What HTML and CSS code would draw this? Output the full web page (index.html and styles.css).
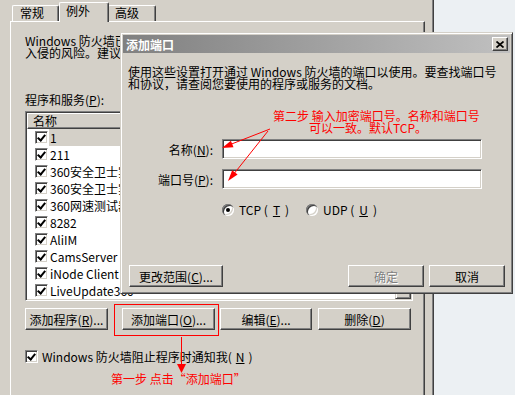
FILE: index.html
```html
<!DOCTYPE html>
<html lang="zh-CN">
<head>
    <meta charset="UTF-8">
    <meta name="viewport" content="width=device-width, initial-scale=1.0">
    <title>Windows 防火墙 - 添加端口</title>
    <link rel="stylesheet" href="styles.css">
</head>
<body>
    <div class="screen">
        <div class="fw-window">
            <div class="tabs">
                <div class="tab">常规</div>
                <div class="tab active">例外</div>
                <div class="tab last">高级</div>
            </div>
            <div class="panel">
                <p class="intro">Windows 防火墙已阻止传入的网络连接，但下面选定的程序和服务除外。添加例外<br>入侵的风险。建议您只添加确实需要的例外。</p>

                <div class="list-label">程序和服务(<u>P</u>):</div>
                <div class="listbox">
                    <div class="list-main">
                        <div class="list-head">名称</div>
                        <ul class="list-rows">
                            <li class="selected"><span class="cb checked"></span><span class="item-text">1</span></li>
                            <li><span class="cb checked"></span><span class="item-text">211</span></li>
                            <li><span class="cb checked"></span><span class="item-text">360安全卫士实时保护</span></li>
                            <li><span class="cb checked"></span><span class="item-text">360安全卫士实时防护</span></li>
                            <li><span class="cb checked"></span><span class="item-text">360网速测试器</span></li>
                            <li><span class="cb checked"></span><span class="item-text">8282</span></li>
                            <li><span class="cb checked"></span><span class="item-text">AliIM</span></li>
                            <li><span class="cb checked"></span><span class="item-text">CamsServer</span></li>
                            <li><span class="cb checked"></span><span class="item-text">iNode Client</span></li>
                            <li><span class="cb checked"></span><span class="item-text">LiveUpdate360</span></li>
                        </ul>
                    </div>
                    <div class="vscroll">
                        <div class="sb-btn"></div>
                        <div class="sb-track"></div>
                        <div class="sb-btn"></div>
                    </div>
                </div>

                <div class="btn-row">
                    <button class="btn btn-add-prog">添加程序(<u>R</u>)...</button>
                    <button class="btn btn-add-port">添加端口(<u>O</u>)...</button>
                    <button class="btn btn-edit">编辑(<u>E</u>)...</button>
                    <button class="btn btn-del">删除(<u>D</u>)</button>
                </div>

                <div class="notify"><span class="cb checked"></span>Windows 防火墙阻止程序时通知我(<u>N</u>)</div>
            </div>
        </div>
        <div class="desktop"></div>
    </div>

    <!-- 添加端口 dialog, floats over the firewall window -->
    <div class="dialog">
        <div class="dlg-title">
            <span>添加端口</span>
            <span class="dlg-close">
                <svg width="8" height="7" viewBox="0 0 8 7"><path d="M0.5 0.5 L7.5 6.5 M7.5 0.5 L0.5 6.5" stroke="#000" stroke-width="1.7"/></svg>
            </span>
        </div>
        <div class="dlg-body">
            <p class="dlg-text">使用这些设置打开通过 Windows 防火墙的端口以使用。要查找端口号<br>和协议，请查阅您要使用的程序或服务的文档。</p>

            <div class="field-row first">
                <label class="field-label">名称(<u>N</u>):</label>
                <div class="field"></div>
            </div>
            <div class="field-row">
                <label class="field-label">端口号(<u>P</u>):</label>
                <div class="field"></div>
            </div>

            <div class="radio-row">
                <div class="radio-opt"><span class="radio checked"></span>TCP (<u>T</u>)</div>
                <div class="radio-opt"><span class="radio"></span>UDP (<u>U</u>)</div>
            </div>

            <div class="dlg-buttons">
                <button class="btn btn-scope">更改范围(<u>C</u>)...</button>
                <button class="btn btn-ok" disabled>确定</button>
                <button class="btn btn-cancel">取消</button>
            </div>
        </div>
    </div>

    <!-- red hand-drawn annotations -->
    <svg class="annot" width="515" height="395" viewBox="0 0 515 395">
        <rect x="114.5" y="304.5" width="104" height="31" fill="none" stroke="#f00"/>
        <line x1="181.5" y1="337" x2="181.5" y2="366" stroke="#f00"/>
        <polygon points="177,364 186,364 181.5,373" fill="#f00"/>
        <line x1="270" y1="129" x2="229" y2="145" stroke="#f00"/>
        <polygon points="222,148 233.5,147.2 230.9,140.7" fill="#f00"/>
        <line x1="268" y1="131" x2="233" y2="175" stroke="#f00"/>
        <polygon points="228,181 237.6,174.6 232.2,170.2" fill="#f00"/>
    </svg>
    <div class="note note-step2a">第二步 输入加密端口号。名称和端口号</div>
    <div class="note note-step2b">可以一致。默认TCP。</div>
    <div class="note note-step1">第一步 点击“添加端口”</div>
</body>
</html>
```

FILE: styles.css
```css
:root {
    --face: #d4d0c8;
    --shadow: #808080;
    --dark: #404040;
    --hilite: #ffffff;
    --red: #ff0000;
}

* {
    margin: 0;
    padding: 0;
    box-sizing: border-box;
}

body {
    position: relative;
    width: 515px;
    height: 395px;
    overflow: hidden;
    background-color: var(--face);
    color: #000;
    font-family: "Noto Sans CJK SC", "Liberation Sans", sans-serif;
    font-size: 12px;
}

u {
    text-decoration: underline;
}

.screen {
    display: flex;
    height: 395px;
}

/* firewall properties window */
.fw-window {
    width: 434px;
    padding: 2px 0 0 10px;
    border-right: 1px solid var(--dark);
    box-shadow: inset -1px 0 var(--shadow);
}

.desktop {
    flex: 1;
    background-color: #ecf0f3;
}

.tabs {
    display: flex;
    align-items: flex-end;
    height: 19px;
    padding-left: 2px;
}

.tab {
    width: 47px;
    height: 16px;
    padding-left: 7px;
    line-height: 14px;
    border: 1px solid;
    border-color: var(--hilite) var(--dark) transparent var(--hilite);
    border-bottom: none;
    border-radius: 2px 2px 0 0;
    box-shadow: inset -1px 0 var(--shadow);
}

.tab.active {
    position: relative;
    z-index: 1;
    width: 50px;
    height: 20px;
    margin-bottom: -1px;
    padding-left: 6px;
    line-height: 16px;
    background-color: var(--face);
}

.tab.last {
    width: 48px;
    margin-left: -1px;
    padding-left: 6px;
}

.panel {
    width: 415px;
    height: 380px;
    padding: 13px 0 0 14px;
    border: 1px solid;
    border-color: var(--hilite) var(--dark) var(--dark) var(--hilite);
    box-shadow: inset -1px 0 var(--shadow);
}

.intro {
    line-height: 12px;
    white-space: nowrap;
}

.list-label {
    margin-top: 35px;
    line-height: 12px;
}

.listbox {
    display: flex;
    width: 388px;
    height: 190px;
    margin-top: 5px;
    padding: 1px;
    background-color: #fff;
    border: 1px solid;
    border-color: var(--shadow) var(--hilite) var(--hilite) var(--shadow);
    box-shadow: inset 1px 1px var(--dark), inset -1px -1px var(--face);
}

.list-main {
    flex: 1;
    overflow: hidden;
}

.list-head {
    height: 16px;
    padding-left: 5px;
    line-height: 14px;
    background-color: var(--face);
    border: 1px solid;
    border-color: var(--hilite) var(--dark) var(--dark) var(--hilite);
    box-shadow: inset -1px -1px var(--shadow);
}

.list-rows {
    list-style: none;
}

.list-rows li {
    display: flex;
    align-items: center;
    height: 17px;
    padding-left: 8px;
    white-space: nowrap;
}

.item-text {
    flex: 1;
    margin-left: 1px;
    padding-left: 1px;
    line-height: 17px;
}

.list-rows li.selected .item-text {
    background-color: var(--face);
}

.vscroll {
    display: flex;
    flex-direction: column;
    width: 16px;
}

.sb-track {
    flex: 1;
    background-color: #ebe9e5;
}

.sb-btn {
    height: 16px;
    background-color: var(--face);
    border: 1px solid;
    border-color: var(--face) var(--dark) var(--dark) var(--face);
    box-shadow: inset 1px 1px var(--hilite), inset -1px -1px var(--shadow);
}

/* check box */
.cb {
    position: relative;
    flex: none;
    display: inline-block;
    width: 13px;
    height: 13px;
    background-color: #fff;
    border: 1px solid;
    border-color: var(--shadow) var(--hilite) var(--hilite) var(--shadow);
    box-shadow: inset 1px 1px var(--dark), inset -1px -1px var(--face);
}

.cb.checked::after {
    content: "";
    position: absolute;
    left: 3px;
    top: 1px;
    width: 3px;
    height: 6px;
    border: solid #000;
    border-width: 0 2px 2px 0;
    transform: rotate(40deg);
}

/* push buttons */
.btn {
    height: 22px;
    padding: 0;
    font: inherit;
    color: #000;
    background-color: var(--face);
    border: 1px solid;
    border-color: var(--hilite) var(--dark) var(--dark) var(--hilite);
    box-shadow: inset -1px -1px var(--shadow);
}

.btn:disabled {
    color: var(--shadow);
    text-shadow: 1px 1px var(--hilite);
}

.btn-row {
    display: flex;
    margin-top: 7px;
}

.btn-add-prog { width: 83px; }
.btn-add-port { width: 93px; margin-left: 14px; }
.btn-edit { width: 92px; margin-left: 5px; }
.btn-del { width: 93px; margin-left: 6px; }

.notify {
    display: flex;
    align-items: center;
    gap: 4px;
    margin-top: 20px;
    line-height: 13px;
}

/* 添加端口 dialog */
.dialog {
    position: absolute;
    left: 120px;
    top: 32px;
    z-index: 5;
    display: flex;
    flex-direction: column;
    width: 393px;
    height: 262px;
    padding: 2px;
    background-color: var(--face);
    border: 1px solid;
    border-color: var(--face) var(--dark) var(--dark) var(--face);
    box-shadow: inset 1px 1px var(--hilite), inset -1px -1px var(--shadow);
}

.dlg-title {
    display: flex;
    align-items: center;
    justify-content: space-between;
    height: 18px;
    padding: 0 2px 0 3px;
    background: linear-gradient(to right, #808080, #c0c0c0);
    color: #fff;
    font-weight: bold;
}

.dlg-close {
    display: flex;
    align-items: center;
    justify-content: center;
    width: 16px;
    height: 14px;
    background-color: var(--face);
    border: 1px solid;
    border-color: var(--hilite) var(--dark) var(--dark) var(--hilite);
    box-shadow: inset -1px -1px var(--shadow);
}

.dlg-body {
    flex: 1;
    display: flex;
    flex-direction: column;
    padding: 13px 5px 4px 5px;
}

.dlg-text {
    line-height: 12px;
    white-space: nowrap;
}

.field-row {
    display: flex;
    align-items: center;
    height: 20px;
    margin-top: 10px;
}

.field-row.first {
    margin-top: 49px;
}

.field-label {
    width: 85px;
    margin-right: 9px;
    text-align: right;
}

.field {
    width: 260px;
    height: 20px;
    background-color: #fff;
    border: 1px solid;
    border-color: var(--shadow) var(--hilite) var(--hilite) var(--shadow);
    box-shadow: inset 1px 1px var(--dark), inset -1px -1px var(--face);
}

.radio-row {
    display: flex;
    height: 12px;
    margin-top: 15px;
    padding-left: 94px;
}

.radio-opt {
    display: flex;
    align-items: center;
    gap: 5px;
    width: 84px;
    line-height: 12px;
}

.radio {
    position: relative;
    flex: none;
    width: 12px;
    height: 12px;
    border-radius: 50%;
    background-color: #fff;
    box-shadow: inset 1px 1px var(--shadow), inset 2px 2px var(--dark), inset -1px -1px var(--hilite), inset -2px -2px var(--face);
}

.radio.checked::after {
    content: "";
    position: absolute;
    left: 4px;
    top: 4px;
    width: 4px;
    height: 4px;
    border-radius: 50%;
    background-color: #000;
}

.dlg-buttons {
    display: flex;
    margin-top: auto;
}

.btn-scope { width: 94px; margin-left: 1px; margin-right: auto; }
.btn-ok { width: 76px; }
.btn-cancel { width: 76px; margin-left: 5px; }

/* red annotations */
.annot {
    position: absolute;
    left: 0;
    top: 0;
    z-index: 10;
    pointer-events: none;
}

.note {
    position: absolute;
    z-index: 11;
    color: var(--red);
    line-height: 12px;
    white-space: nowrap;
}

.note-step2a { left: 273px; top: 110px; }
.note-step2b { left: 309px; top: 122px; }
.note-step1 { left: 111px; top: 373px; }
```
